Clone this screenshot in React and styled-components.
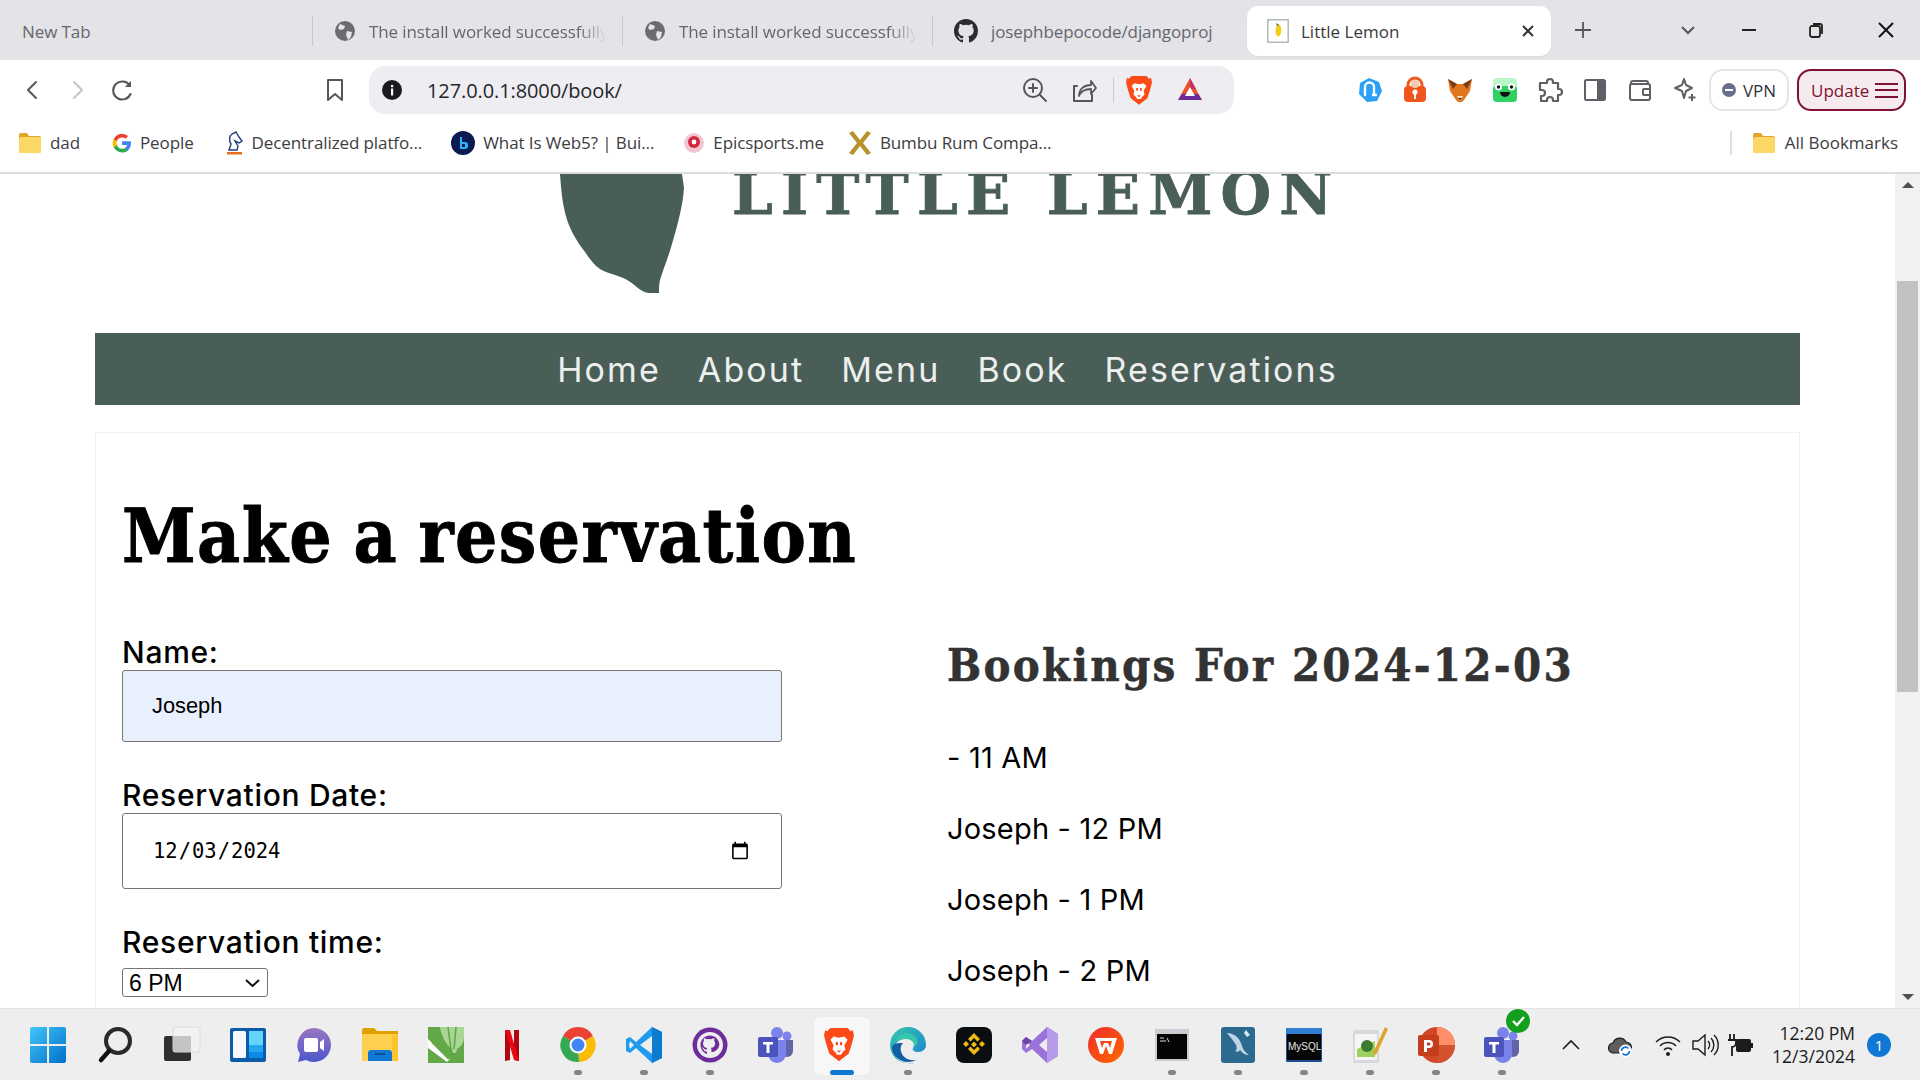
import React from "react";
import styled, { createGlobalStyle } from "styled-components";

const GREEN = "#495e57";
const UI = '"Open Sans", "Noto Sans", "Liberation Sans", sans-serif';
const KARLA = 'Inter, "Noto Sans", sans-serif';

const Global = createGlobalStyle`
  html, body { margin: 0; padding: 0; background: #fff; overflow: hidden; }
  * { box-sizing: border-box; }
  svg { overflow: visible; flex: none; }
`;

const Screen = styled.div`
  width: 1920px; height: 1080px; display: flex; flex-direction: column; overflow: hidden;
  font-family: ${UI}; background: #fff;
`;

/* ---------- browser chrome ---------- */
const TabStrip = styled.div`
  height: 60px; flex: none; background: #e3e3e8; display: flex; align-items: center; position: relative;
`;
const Tab = styled.div`
  width: ${p => p.$w}px; height: 50px; margin-top: 2px; flex: none; display: flex; align-items: center;
  padding-left: ${p => p.$pad}px; gap: 13px; font-size: 17px; color: #66666c;
  border-right: 1px solid ${p => (p.$sep ? "#c8c8cd" : "transparent")};
  border-image: ${p => (p.$sep ? "linear-gradient(transparent 22%, #c8c8cd 22%, #c8c8cd 78%, transparent 78%) 1" : "none")};
`;
const TabTitle = styled.span`
  white-space: nowrap; overflow: hidden; width: ${p => p.$w}px; letter-spacing: -0.1px;
  ${p => p.$fade && "-webkit-mask-image: linear-gradient(90deg, #000 88%, transparent);"}
`;
const ActiveTab = styled.div`
  width: 304px; height: 50px; margin-left: 4px; margin-top: 2px; flex: none; display: flex; align-items: center;
  background: #fff; border-radius: 11px; padding: 0 16px 0 20px; color: #3a3a40; font-size: 17px; gap: 12px;
  box-shadow: 0 1px 2px rgba(0,0,0,.05);
`;
const Grow = styled.span`flex: 1;`;
const StripRight = styled.div`
  display: flex; align-items: center; flex: none; margin-left: 11px; height: 100%;
`;
const StripBtn = styled.div`
  width: ${p => p.$w}px; margin-left: ${p => p.$ml || 0}px; display: flex; justify-content: center; align-items: center;
`;

const Toolbar = styled.div`
  height: 58px; flex: none; display: flex; align-items: center; padding-left: 11px; padding-top: 2px; background: #fff;
`;
const NavBtn = styled.div`
  width: ${p => p.$w || 44}px; height: 44px; display: flex; align-items: center; justify-content: center; flex: none;
  margin-left: ${p => p.$ml || 0}px;
`;
const Address = styled.div`
  width: 865px; height: 48px; margin-left: 12px; background: #eeeef2; border-radius: 16px; flex: none;
  display: flex; align-items: center; padding: 0 15px 0 13px; color: #26262b; font-size: 20px;
`;
const Url = styled.span`margin-left: 25px; flex: 1; letter-spacing: -0.1px;`;
const Divider = styled.span`width: 1px; height: 26px; background: #c9c9ce; margin: 0 3px;`;
const ExtGroup = styled.div`
  display: flex; align-items: center; margin-left: 113px; flex: none;
`;
const Vpn = styled.div`
  width: 80px; height: 42px; border: 2px solid #e6e6ea; border-radius: 14px; margin-left: 2px; display: flex;
  align-items: center; justify-content: center; gap: 7px; font-size: 17px; color: #33333a;
`;
const VpnDot = styled.span`
  width: 14px; height: 14px; border-radius: 50%; background: #6a6f8f; display: flex; align-items: center; justify-content: center;
  &::after { content: ""; width: 8px; height: 2px; background: #fff; }
`;
const UpdateBtn = styled.div`
  width: 109px; height: 42px; margin-left: 8px; border: 2px solid #7e1230; border-radius: 14px; background: #f5ebee;
  display: flex; align-items: center; padding-left: 12px; gap: 6px; color: #7e1230; font-size: 17px;
`;
const Burger = styled.span`
  width: 23px; height: 15px; border-top: 2px solid #7e1230; border-bottom: 2px solid #7e1230; position: relative;
  &::after { content: ""; position: absolute; left: 0; right: 0; top: 4.5px; height: 2px; background: #7e1230; }
`;

const Bookmarks = styled.div`
  height: 56px; flex: none; display: flex; align-items: center; padding: 0 0 5px 18px; border-bottom: 2px solid #dcdcdc;
  background: #fff; font-size: 17px; color: #3c3c42;
`;
const Mark = styled.div`
  display: flex; align-items: center; gap: 8px; margin-right: ${p => p.$mr}px; white-space: nowrap; letter-spacing: -0.1px;
`;
const MarkEnd = styled.div`
  margin-left: auto; display: flex; align-items: center; gap: 9px; padding-right: 22px;
`;
const MarkSep = styled.span`width: 2px; height: 24px; background: #dedee2; margin-right: 11px;`;

/* ---------- page ---------- */
const Viewport = styled.div`flex: 1; min-height: 0; display: flex; overflow: hidden; background: #fff;`;
const Page = styled.div`flex: 1; min-width: 0; padding-left: 95px; overflow: hidden;`;
const Wrap = styled.div`width: 1705px;`;
const LogoRow = styled.header`
  height: 159px; display: flex; justify-content: center; align-items: flex-start; gap: 48px; overflow: hidden;
`;
const LogoText = styled.div`
  font-family: "DejaVu Serif", serif; font-weight: 700; font-size: 58px; line-height: 1; letter-spacing: 8.2px;
  color: ${GREEN}; margin-top: -9px; white-space: nowrap; width: 603px; -webkit-text-stroke: 0.8px ${GREEN};
`;
const NavBar = styled.nav`
  height: 72px; background: ${GREEN}; display: flex; justify-content: center; align-items: center; gap: 37px;
`;
const NavLink = styled.a`
  font-family: ${KARLA}; font-size: 34px; color: #edefee; letter-spacing: 2.1px; font-weight: 400;
`;
const Card = styled.main`
  margin-top: 27px; border: 1px solid #f1f1f1; border-bottom: none; padding: 0 26px; height: 700px;
`;
const H1 = styled.h1`
  margin: 60px 0 0; font-family: "DejaVu Serif Condensed", "DejaVu Serif", serif; font-weight: 700; font-size: 74px;
  line-height: 86px; color: #000; letter-spacing: 1.4px; word-spacing: -4px; font-stretch: condensed; -webkit-text-stroke: 0.9px #000;
`;
const Cols = styled.div`
  display: grid; grid-template-columns: 660px 1fr; column-gap: 165px; margin-top: 61px;
`;
const Form = styled.form`display: flex; flex-direction: column;`;
const Label = styled.label`
  display: block; height: 30px; margin-top: ${p => p.$mt || 0}px; font-family: ${KARLA}; font-size: 30px; font-weight: 500;
  line-height: 25px; color: #000; letter-spacing: 0.7px;
`;
const TextInput = styled.input`
  display: block; width: 660px; height: 72px; border: 1px solid #767676; border-radius: 3px; background: #e8f0fe;
  padding: 0 29px; font-family: "Liberation Sans", sans-serif; font-size: 21.8px; color: #000; outline: none;
`;
const DateInput = styled.input`
  display: block; width: 660px; height: 76px; border: 1px solid #767676; border-radius: 3px; background: #fff;
  padding: 0 29px; font-family: "DejaVu Sans Mono", "Liberation Mono", monospace; font-size: 20.5px; color: #000; outline: none;
`;
const chevron = `url("data:image/svg+xml,%3Csvg xmlns='http://www.w3.org/2000/svg' viewBox='0 0 15 8'%3E%3Cpath d='M1 1l6.500 6L14 1' fill='none' stroke='%23111' stroke-width='2'/%3E%3C/svg%3E")`;
const TimeSelect = styled.select`
  display: block; width: 146px; height: 29px; margin-top: 8px; border: 1px solid #767676; border-radius: 3px;
  appearance: none; background: #fff ${chevron} no-repeat 122px center / 15px 8px;
  font-family: "Liberation Sans", sans-serif; font-size: 23px; color: #000; padding: 0 6px;
`;
const Bookings = styled.section`display: flex; flex-direction: column; margin-top: -4px;`;
const H2 = styled.h2`
  margin: 0; font-family: "DejaVu Serif Condensed", "DejaVu Serif", serif; font-weight: 700; font-size: 45px;
  line-height: 60px; color: #333; letter-spacing: 2.3px; font-stretch: condensed; -webkit-text-stroke: 0.5px #333;
`;
const Booking = styled.p`
  margin: ${p => p.$first ? 26 : 0}px 0 0; height: 71px; line-height: 71px; font-family: ${KARLA}; font-size: 29px; color: #000;
  letter-spacing: 0.2px; font-weight: 400;
`;
const Scrollbar = styled.aside`
  width: 25px; flex: none; background: #f1f1f1; display: flex; flex-direction: column; align-items: center;
`;
const ArrowUp = styled.span`
  margin-top: 8px; width: 0; height: 0; border-left: 6px solid transparent; border-right: 6px solid transparent;
  border-bottom: 6px solid #505050;
`;
const Thumb = styled.span`width: 21px; height: 411px; margin-top: 93px; background: #c1c1c1;`;
const ArrowDown = styled.span`
  margin-top: auto; margin-bottom: 8px; width: 0; height: 0; border-left: 6px solid transparent; border-right: 6px solid transparent;
  border-top: 6px solid #505050;
`;

/* ---------- taskbar ---------- */
const Taskbar = styled.footer`
  height: 72px; flex: none; background: #eeeeee; border-top: 1px solid #e4e4e4; display: flex; align-items: flex-start; padding-left: 17px;
`;
const Slot = styled.div`
  width: 66px; height: 71px; flex: none; display: flex; justify-content: center; position: relative; padding-top: 18px;
`;
const ActiveBg = styled.span`
  position: absolute; left: 5px; right: 5px; top: 8px; bottom: 5px; background: #f7f7f7; border-radius: 5px;
  box-shadow: 0 0 1px rgba(0,0,0,.15);
`;
const Dot = styled.span`
  position: absolute; bottom: 5px; left: 50%; transform: translateX(-50%); height: 5px; border-radius: 3px;
  width: ${p => (p.$active ? 24 : 8)}px; background: ${p => (p.$active ? "#0f78d4" : "#858585")};
`;
const IconBox = styled.span`position: relative; display: block; width: 36px; height: 36px;`;
const Tray = styled.div`
  margin-left: auto; display: flex; align-items: center; height: 71px; padding-right: 29px;
`;
const TrayIcon = styled.span`
  display: flex; justify-content: center; align-items: center; width: ${p => p.$w}px; color: #1c1c1c;
`;
const Clock = styled.div`
  margin-left: 18px; text-align: right; font-size: 17.5px; line-height: 23px; color: #1c1c1c; letter-spacing: 0;
`;
const Badge = styled.span`
  width: 24px; height: 24px; margin-left: 12px; border-radius: 50%; background: #0f78d4; color: #fff; font-size: 15px;
  display: flex; align-items: center; justify-content: center;
`;

/* ---------- icons ---------- */
const Ico = ({ s = 24, w, h, vb, children }) => (
  <svg width={w || s} height={h || s} viewBox={vb || `0 0 ${s} ${s}`} fill="none">{children}</svg>
);
const stroke = { stroke: "#55555c", strokeWidth: 2, strokeLinecap: "round", strokeLinejoin: "round" };

const Globe = () => (
  <Ico s={22}><circle cx="11" cy="11" r="10" fill="#6b6b72" />
    <path d="M6 4l5 2-1 3-4 1-2-2zM13 11l5 1-1 5-3 3-2-5z" fill="#e3e3e8" /></Ico>
);
const GitHubMark = ({ size = 24, color = "#2b2b30" }) => (
  <svg width={size} height={size} viewBox="0 0 16 16" fill={color}>
    <path d="M8 0C3.58 0 0 3.58 0 8c0 3.54 2.29 6.53 5.47 7.59.4.07.55-.17.55-.38 0-.19-.01-.82-.01-1.49-2.01.37-2.53-.49-2.69-.94-.09-.23-.48-.94-.82-1.13-.28-.15-.68-.52-.01-.53.63-.01 1.08.58 1.23.82.72 1.21 1.87.87 2.33.66.07-.52.28-.87.51-1.07-1.78-.2-3.64-.89-3.64-3.95 0-.87.31-1.59.82-2.15-.08-.2-.36-1.02.08-2.12 0 0 .67-.21 2.2.82a7.6 7.6 0 014 0c1.53-1.04 2.2-.82 2.2-.82.44 1.1.16 1.92.08 2.12.51.56.82 1.27.82 2.15 0 3.07-1.87 3.75-3.65 3.95.29.25.54.73.54 1.48 0 1.07-.01 1.93-.01 2.2 0 .21.15.46.55.38A8 8 0 0016 8c0-4.42-3.58-8-8-8z" />
  </svg>
);
const Favicon = () => (
  <Ico w={22} h={24} vb="0 0 22 24">
    <rect x=".8" y=".8" width="20.4" height="22.4" fill="#fff" stroke="#a9b5b0" strokeWidth="1.4" />
    <path d="M11 5c3 1 4 5 3 9-1 3-3 4-4 3-2-2-2-8 1-12z" fill="#f4ce14" /><path d="M9 4l3 2-2 1z" fill="#495e57" />
  </Ico>
);
const Folder = () => (
  <Ico w={24} h={22} vb="0 0 24 22">
    <path d="M1 3a2 2 0 012-2h6l2 3h10a2 2 0 012 2v13a2 2 0 01-2 2H3a2 2 0 01-2-2z" fill="#e0a526" />
    <rect x="1" y="5" width="22" height="16" rx="2" fill="#fbd866" />
  </Ico>
);
const BraveLion = ({ size = 28 }) => (
  <svg width={size} height={size * 1.14} viewBox="0 0 28 32">
    <path d="M6 1h16l3 3 2-1 1 5-2 8-3 9-9 7-9-7-3-9-2-8 1-5 2 1z" fill="#fb4a17" />
    <path d="M9 9l5 1 5-1 3 3-3 5 1 4-3 3-1 2h-4l-1-2-3-3 1-4-3-5z" fill="#fff" />
    <path d="M11 14h2v3h-2zM15 14h2v3h-2zM12 22h4l-2 2z" fill="#fb4a17" />
  </svg>
);
const Bat = () => (
  <Ico s={28}>
    <path d="M14 2l12 22H2z" fill="#e8532c" /><path d="M14 2l6 11-6 0z" fill="#c62f68" />
    <path d="M2 24h24l-4-6H6z" fill="#6a2a9a" /><path d="M14 11l5 9H9z" fill="#fff" />
  </Ico>
);

const Ext = {
  proton: () => (
    <Ico s={26}><path d="M12 1l10 4 3 9-5 10-10 1-8-8L3 6z" fill="#2aa1f5" />
      <path d="M8 18V10a4.5 4.5 0 019 0v8M16 18h3" stroke="#fff" strokeWidth="2.4" strokeLinecap="round" /></Ico>
  ),
  lock: () => (
    <Ico s={26}><path d="M6 11V8a7 7 0 0114 0v3" stroke="#f05a22" strokeWidth="3" /><rect x="2" y="9" width="22" height="16" rx="4" fill="#f0551e" />
      <circle cx="13" cy="7" r="4" fill="#f7c6ae" /><circle cx="13" cy="15" r="2.6" fill="#fff" /><rect x="12" y="15" width="2" height="7" fill="#fff" /></Ico>
  ),
  fox: () => (
    <Ico s={26}><path d="M1 2l9 5h6l9-5-2 12-6 9-2 2h-4l-2-2-6-9z" fill="#e2761b" /><path d="M1 2l9 5-4 5zM25 2l-9 5 4 5z" fill="#763d16" />
      <path d="M10 19h6l-2 4h-2z" fill="#f5d9c3" /><path d="M11 21h4l-2 2z" fill="#222" /></Ico>
  ),
  frog: () => (
    <Ico s={26}><rect x="1" y="1" width="24" height="24" rx="4" fill="#b7f7c8" /><rect x="1" y="9" width="24" height="16" rx="4" fill="#2fd163" />
      <circle cx="6.5" cy="10" r="3.5" fill="#fff" /><circle cx="19.5" cy="10" r="3.5" fill="#fff" /><circle cx="6.5" cy="10" r="1.7" fill="#111" /><circle cx="19.5" cy="10" r="1.7" fill="#111" />
      <path d="M8 15h10a5 5 0 01-10 0z" fill="#111" /></Ico>
  ),
  puzzle: () => (
    <Ico s={26}><path d="M10 6V5a3 3 0 016 0v1h5v6h1a3 3 0 010 6h-1v6h-5v-1a3 3 0 00-6 0v1H4v-5h1a3 3 0 000-6H3V6z" stroke="#5f6066" strokeWidth="2.2" strokeLinejoin="round" /></Ico>
  ),
  panel: () => (
    <Ico s={24}><rect x="2" y="2" width="20" height="20" rx="1.5" stroke="#5f6066" strokeWidth="2" /><rect x="14" y="2" width="8" height="20" fill="#5f6066" /></Ico>
  ),
  wallet: () => (
    <Ico s={24}><path d="M3 6V5a2 2 0 012-2h13a2 2 0 012 2v2" stroke="#5f6066" strokeWidth="2" /><rect x="2" y="6" width="20" height="16" rx="2" stroke="#5f6066" strokeWidth="2" />
      <rect x="15" y="11" width="7" height="6" rx="1" stroke="#5f6066" strokeWidth="2" /></Ico>
  ),
  spark: () => (
    <Ico s={26}><path d="M12 2l2 6 6 3-6 3-2 7-2-7-7-3 7-3z" stroke="#5f6066" strokeWidth="2" strokeLinejoin="round" /><path d="M20 17v7M16.5 20.5h7" stroke="#5f6066" strokeWidth="2" /></Ico>
  ),
};

const Task = {
  windows: () => (
    <Ico w={36} h={36} vb="2 0 36 36">
      <defs><linearGradient id="wg" x1="0" y1="0" x2="1" y2="1"><stop offset="0" stopColor="#43c6f7" /><stop offset="1" stopColor="#0070cc" /></linearGradient></defs>
      <path d="M0 2a2 2 0 012-2h15v17H0zM19 0h15a2 2 0 012 2v15H19zM0 19h17v17H2a2 2 0 01-2-2zM19 19h17v15a2 2 0 01-2 2H19z" fill="url(#wg)" />
    </Ico>
  ),
  search: () => (
    <Ico s={36}><circle cx="20" cy="14" r="12" stroke="#2a2a2a" strokeWidth="4" /><path d="M11 24l-8 9" stroke="#111" strokeWidth="4.5" strokeLinecap="round" /></Ico>
  ),
  taskview: () => (
    <Ico s={36}><rect x="0" y="9" width="27" height="25" rx="2" fill="#2f2f2f" /><rect x="9" y="0" width="27" height="25" rx="2" fill="#f3f3f3" fillOpacity=".75" stroke="#dcdcdc" /><rect x="9" y="9" width="18" height="16" fill="#c4c4c4" /></Ico>
  ),
  widgets: () => (
    <Ico s={36}><rect width="36" height="34" y="1" rx="2" fill="#0c5ba8" /><rect x="3" y="4" width="13" height="27" rx="1.5" fill="#f6f8fb" /><rect x="19" y="4" width="14" height="14" fill="#63d5ff" /><rect x="19" y="18" width="14" height="7" fill="#22a7f0" /><rect x="19" y="25" width="14" height="6" fill="#0d8ae6" /></Ico>
  ),
  meet: () => (
    <Ico s={36}>
      <defs><linearGradient id="mg" x1="0" y1="0" x2="0" y2="1"><stop offset="0" stopColor="#9a75c4" /><stop offset="1" stopColor="#4d57ca" /></linearGradient></defs>
      <path d="M18 1a17 17 0 11-8 32l-8 2 2-8A17 17 0 0118 1z" fill="url(#mg)" /><rect x="8" y="11" width="14" height="14" rx="2" fill="#fff" /><path d="M24 15l4-3v12l-4-3z" fill="#fff" />
    </Ico>
  ),
  files: () => (
    <Ico s={36}><path d="M0 3a2 2 0 012-2h10l3 3h21v30H0z" fill="#e0a100" /><rect y="7" width="36" height="27" rx="1" fill="#ffd04f" /><path d="M6 34V26a3 3 0 013-3h18a3 3 0 013 3v8z" fill="#0f78d4" /><rect x="13" y="26" width="10" height="2" fill="#0a4f91" /><path d="M30 8h6v26h-6z" fill="#fbb80d" opacity=".5" /></Ico>
  ),
  corel: () => (
    <Ico s={36}><rect width="36" height="36" fill="#62a846" /><path d="M12 0h24v10a14 14 0 01-7 12l-1 4h-3l-1-4C18 18 13 8 12 0z" fill="#a9d596" /><path d="M0 12l22 20-3 3L0 21z" fill="#fff" /><path d="M4 15l17 17" stroke="#62a846" strokeWidth="2" /><path d="M20 0l3 22M28 0l-2 22" stroke="#62a846" strokeWidth="1.6" /></Ico>
  ),
  netflix: () => (
    <Ico s={36}><path d="M11 3h5v30l-5 1z" fill="#b1060f" /><path d="M20 3h5v31l-5-1z" fill="#b1060f" /><path d="M11 3h5l9 31-5-1z" fill="#e50914" /></Ico>
  ),
  chrome: () => (
    <Ico s={36}><path d="M18 18L3 9a17 17 0 0130 0z" fill="#ea4335" /><path d="M18 18l15-9a17 17 0 01-14 26z" fill="#fbbc04" /><path d="M18 18L19 35A17 17 0 013 9z" fill="#34a853" /><circle cx="18" cy="18" r="8.5" fill="#fff" /><circle cx="18" cy="18" r="6.5" fill="#4285f4" /></Ico>
  ),
  vscode: () => (
    <Ico s={36}><path d="M26 0l10 5v26l-10 5L10 21l-6 5-4-2v-12l4-2 6 5z" fill="#1f9cf0" /><path d="M26 9L14 18l12 9z" fill="#eeeeee" /><path d="M26 0l10 5v26l-10 5z" fill="#0d7ccf" /><path d="M4 14l-1 4 1 4 4-4z" fill="#eeeeee" /></Ico>
  ),
  github: () => (
    <Ico s={36}><circle cx="18" cy="18" r="17.5" fill="#6e2d9b" /><circle cx="18" cy="18" r="13" fill="#eeeeee" /><g transform="translate(8.5 8.5) scale(1.18)"><path fill="#6e2d9b" d="M8 0C3.58 0 0 3.58 0 8c0 3.54 2.29 6.53 5.47 7.59V13.5c-1.5.3-2.5-.5-3-1.7-.2-.5-.6-.9-.8-1.1-.3-.2-.6-.5 0-.5.6 0 1 .6 1.2.8.7 1.2 1.9.9 2.4.7.1-.5.3-.9.5-1.1-1.8-.2-3.6-.9-3.6-4 0-.9.3-1.6.8-2.1-.1-.2-.4-1 .1-2.1 0 0 .7-.2 2.2.8a7.6 7.6 0 014 0c1.5-1 2.2-.8 2.2-.8.4 1.1.2 1.9.1 2.1.5.6.8 1.3.8 2.1 0 3.1-1.9 3.8-3.6 4 .3.3.5.7.5 1.5v2.1A8 8 0 0016 8c0-4.42-3.58-8-8-8z" /></g></Ico>
  ),
  teams: () => (
    <Ico s={36}><circle cx="29" cy="9" r="4.5" fill="#7b83eb" /><circle cx="19" cy="6" r="6" fill="#7b83eb" /><path d="M23 13h12v11a6 6 0 01-12 0z" fill="#6264a7" /><path d="M10 13h18v14a9 9 0 01-18 0z" fill="#7b83eb" /><rect x="0" y="10" width="20" height="20" rx="2" fill="#4b53bc" /><path d="M5 15h10v2.5h-3.500V26h-3v-8.500H5z" fill="#fff" /></Ico>
  ),
  brave: () => <BraveLion size={30} />,
  edge: () => (
    <Ico s={36}>
      <defs><linearGradient id="eg" x1="0" y1="0" x2="1" y2="1"><stop offset="0" stopColor="#37c8ab" /><stop offset="1" stopColor="#1a7fd6" /></linearGradient></defs>
      <path d="M18 0a18 18 0 0118 18c0 4-3 7-8 7-4 0-6-2-5-4 2-3 1-8-5-9-8-1-14 4-14 12 0 6 6 12 14 12 3 0 5 0 6 0a18 18 0 01-7 0C8 36 0 28 0 18A18 18 0 0118 0z" fill="url(#eg)" /><path d="M6 14C10 4 22 4 27 12c1 3 0 6-3 8 1-4-2-8-8-8-4 0-8 1-10 2z" fill="#37c8ab" /><path d="M2 20c0 8 7 15 16 15 3 0 6-1 8-2-8 1-14-3-15-9-1-3 0-6 2-8-5 0-10 0-11 4z" fill="#115ea3" />
    </Ico>
  ),
  binance: () => (
    <Ico s={36}><rect width="36" height="36" rx="8" fill="#0b0e11" /><path d="M18 6l6 6-2.500 2.500L18 11l-3.500 3.500L12 12zM7 17l3-3 3 3-3 3zM23 17l3-3 3 3-3 3zM18 14.500l3 3-3 3-3-3zM12 22l2.500-2.500L18 23l3.500-3.500L24 22l-6 6z" fill="#f0b90b" /></Ico>
  ),
  vs: () => (
    <Ico s={36}><path d="M25 0l11 7v22l-11 7L10 22l-6 4-4-4V14l4-4 6 4z" fill="#9b72d9" /><path d="M25 11l-8 7 8 7z" fill="#eeeeee" /><path d="M4 14l4 4-4 4z" fill="#eeeeee" /><path d="M25 0l11 7v22l-11 7z" fill="#b79be8" /><path d="M0 14l4-4 6 4-6 4z" fill="#6f42a6" /></Ico>
  ),
  wps: () => (
    <Ico s={36}>
      <defs><linearGradient id="wp" x1="0" y1="0" x2="1" y2="1"><stop offset="0" stopColor="#ee2c2c" /><stop offset="1" stopColor="#ff6a00" /></linearGradient></defs>
      <circle cx="18" cy="18" r="18" fill="url(#wp)" /><path d="M7 11h22l-5 16h-3l-3-8-3 8h-3zM12 14l2 7 2-5h4l2 5 2-7z" fill="#fff" fillRule="evenodd" />
    </Ico>
  ),
  cmd: () => (
    <Ico s={36}><rect x="1" y="2" width="34" height="32" fill="#c9cdd1" /><rect x="3" y="7" width="30" height="25" fill="#050505" /><path d="M6 11h4M6 14h6M13 11l2 4" stroke="#ddd" strokeWidth="1" /></Ico>
  ),
  mysql: () => (
    <Ico s={36}><rect x="1" width="34" height="36" rx="3" fill="#2d6a8f" /><path d="M7 6c7 0 13 5 15 13 1 4 4 7 7 9-4 0-7-2-9-5-1 2-3 2-5 1 2-1 2-3 1-6-2-4-5-7-9-12z" fill="#bcd6e5" /><path d="M26 3l4 5-3 2-3-4z" fill="#d8e6ee" /></Ico>
  ),
  shell: () => (
    <Ico s={36}><rect y="1" width="36" height="34" rx="1" fill="#1e4f94" /><rect y="1" width="36" height="6" fill="#2f7ed1" /><rect x="1" y="7" width="34" height="26" fill="#070707" /><text x="2" y="23" fontFamily="Liberation Sans, sans-serif" fontSize="10" fill="#e6e6e6">MySQL</text></Ico>
  ),
  notepad: () => (
    <Ico s={36}><path d="M1 3h26v33H1z" fill="#d7dadb" /><path d="M3 7h22v26H3z" fill="#f5f5f5" /><path d="M5 22l18-8v16H5z" fill="#9fcf5f" /><circle cx="15" cy="19" r="6" fill="#3c7a2f" /><path d="M33 0l-12 26 3 2L36 2z" fill="#e0a32c" /></Ico>
  ),
  ppt: () => (
    <Ico s={36}><circle cx="19" cy="18" r="18" fill="#d24726" /><path d="M19 0a18 18 0 0118 18H19z" fill="#ff8f6b" /><path d="M19 18h18a18 18 0 01-18 18z" fill="#d35230" /><rect x="0" y="8" width="21" height="21" rx="2" fill="#c43e1c" /><path d="M6 13h5a4 4 0 010 8H9v4H6zM9 15.500v3h2a1.500 1.500 0 000-3z" fill="#fff" fillRule="evenodd" /></Ico>
  ),
};

const Check = styled.span`
  position: absolute; right: -10px; top: -18px; width: 24px; height: 24px; border-radius: 50%; background: #12a01e; display: flex;
  align-items: center; justify-content: center;
`;

const tasks = [
  ["windows"], ["search"], ["taskview"], ["widgets"], ["meet"], ["files"], ["corel"], ["netflix"],
  ["chrome", 1], ["vscode", 1], ["github", 1], ["teams"], ["brave", 2], ["edge", 1], ["binance"], ["vs"], ["wps"],
  ["cmd", 1], ["mysql", 1], ["shell", 1], ["notepad", 1], ["ppt", 1], ["teams", 1, true],
];

const bookmarks = [
  ["dad", <Folder key="f" />, 32],
  ["People", <Ico key="g" s={20}><path d="M19 10.200c0-.7-.1-1.300-.2-1.900H10v3.700h5c-.2 1.200-.9 2.200-1.900 2.900v2.300h3c1.800-1.600 2.900-4 2.900-7z" fill="#4285f4" /><path d="M10 19.500c2.500 0 4.700-.8 6.200-2.300l-3-2.300c-.8.600-1.900.9-3.200.9-2.400 0-4.500-1.600-5.200-3.900H1.700v2.400A9.500 9.500 0 0010 19.500z" fill="#34a853" /><path d="M4.800 12a5.600 5.600 0 010-3.700V5.900H1.700a9.500 9.500 0 000 8.500z" fill="#fbbc04" /><path d="M10 4.400c1.400 0 2.600.5 3.500 1.400l2.700-2.700A9.500 9.500 0 001.700 5.900l3.100 2.400C5.500 6 7.600 4.400 10 4.400z" fill="#ea4335" /></Ico>, 32],
  ["Decentralized platfo...", <Ico key="d" w={18} h={24} vb="0 0 18 24"><path d="M10 1l3 5 3 4-3 2-4-2 3 5-1 4H3l2-6c-2-3-2-8 1-10z" stroke="#1f3f7a" strokeWidth="1.4" /><rect x="1" y="21" width="15" height="2.500" fill="#e8701a" /></Ico>, 29],
  ["What Is Web5? | Bui...", <Ico key="b" s={24}><circle cx="12" cy="12" r="12" fill="#0b1a52" /><path d="M9 6h2v5h3a3 3 0 013 3v1a3 3 0 01-3 3H9zm2 7v3h3v-3z" fill="#29b6f6" fillRule="evenodd" /></Ico>, 29],
  ["Epicsports.me", <Ico key="e" s={22}><circle cx="11" cy="11" r="10" fill="#f3c6d2" /><circle cx="11" cy="10" r="6" fill="#d5263f" /><circle cx="11" cy="10" r="2.400" fill="#fff" /></Ico>, 24],
  ["Bumbu Rum Compa...", <Ico key="r" s={24}><path d="M1 2l4-2 7 9 7-9 4 2-8 10 8 10-4 2-7-9-7 9-4-2 8-10z" fill="#b8922c" /></Ico>, 0],
];

export default function App() {
  return (
    <Screen>
      <Global />
      <TabStrip>
        <Tab $w={313} $pad={22} $sep><TabTitle $w={100}>New Tab</TabTitle></Tab>
        <Tab $w={310} $pad={21} $sep><Globe /><TabTitle $w={238} $fade>The install worked successfully! Congratulations!</TabTitle></Tab>
        <Tab $w={310} $pad={21} $sep><Globe /><TabTitle $w={238} $fade>The install worked successfully! Congratulations!</TabTitle></Tab>
        <Tab $w={310} $pad={21}><GitHubMark /><TabTitle $w={240}>josephbepocode/djangoproj</TabTitle></Tab>
        <ActiveTab>
          <Favicon /><span>Little Lemon</span><Grow />
          <Ico s={14}><path d="M2 2l10 10M12 2L2 12" stroke="#333" strokeWidth="2" /></Ico>
        </ActiveTab>
        <StripRight>
          <StripBtn $w={42}><Ico s={20}><path d="M10 2v16M2 10h16" stroke="#555" strokeWidth="1.8" /></Ico></StripBtn>
          <StripBtn $w={22} $ml={73}><Ico s={16}><path d="M2 5l6 6 6-6" stroke="#55555c" strokeWidth="2" /></Ico></StripBtn>
          <StripBtn $w={20} $ml={40}><Ico s={16}><path d="M1 8h14" stroke="#222" strokeWidth="2" /></Ico></StripBtn>
          <StripBtn $w={20} $ml={47}><Ico s={16}><rect x="2" y="4" width="10" height="11" rx="2" stroke="#222" strokeWidth="1.8" /><path d="M5 2h7a2 2 0 012 2v8" stroke="#222" strokeWidth="1.8" /></Ico></StripBtn>
          <StripBtn $w={20} $ml={50}><Ico s={18}><path d="M2 2l14 14M16 2L2 16" stroke="#111" strokeWidth="2" /></Ico></StripBtn>
        </StripRight>
      </TabStrip>

      <Toolbar>
        <NavBtn><Ico s={24}><path d="M15 4l-8 8 8 8" {...stroke} /></Ico></NavBtn>
        <NavBtn><Ico s={24}><path d="M9 4l8 8-8 8" {...stroke} stroke="#c4c4c8" /></Ico></NavBtn>
        <NavBtn $w={46}><Ico s={24}><path d="M20 8a9 9 0 10.500 8" {...stroke} /><path d="M21 3v6h-6" fill="#55555c" /></Ico></NavBtn>
        <NavBtn $ml={168}><Ico s={24}><path d="M5 2h14v20l-7-6-7 6z" {...stroke} /></Ico></NavBtn>
        <Address>
          <Ico s={20}><circle cx="10" cy="10" r="10" fill="#1a1a1e" /><rect x="9" y="8.500" width="2.200" height="7" fill="#fff" /><rect x="9" y="5" width="2.200" height="2.200" fill="#fff" /></Ico>
          <Url>127.0.0.1:8000/book/</Url>
          <Ico s={26}><circle cx="11" cy="11" r="9" {...stroke} /><path d="M11 7v8M7 11h8M18 18l6 6" {...stroke} /></Ico>
          <NavBtn $w={52} $ml={10}><Ico s={26}><path d="M6 9H3v15h18v-6" {...stroke} /><path d="M8 19c0-7 5-11 12-11V4l5 7-5 6v-5c-6 0-10 2-12 7z" {...stroke} strokeWidth="1.800" /></Ico></NavBtn>
          <Divider />
          <NavBtn $w={44}><BraveLion size={26} /></NavBtn>
          <NavBtn $w={58}><Bat /></NavBtn>
        </Address>
        <ExtGroup>
          {Object.values(Ext).map((I, i) => <NavBtn key={i} $w={45}><I /></NavBtn>)}
          <Vpn><VpnDot />VPN</Vpn>
          <UpdateBtn>Update<Burger /></UpdateBtn>
        </ExtGroup>
      </Toolbar>

      <Bookmarks>
        {bookmarks.map(([t, icon, mr]) => <Mark key={t} $mr={mr}>{icon}{t}</Mark>)}
        <MarkEnd><MarkSep /><Folder />All Bookmarks</MarkEnd>
      </Bookmarks>

      <Viewport>
        <Page>
          <Wrap>
            <LogoRow>
              <svg width="124" height="119" viewBox="0 0 124 119">
                <path d="M0 0C1 14 2 24 4 34C8 54 16 66 25 78C33 90 38 95 46 98C58 102 66 104 73 110C80 116 85 119 89 119L99 119C99 114 99 110 100 106C103 96 108 84 112 70C118 50 123 30 124 14L122 0Z" fill={GREEN} />
              </svg>
              <LogoText>LITTLE LEMON</LogoText>
            </LogoRow>
            <NavBar>
              {["Home", "About", "Menu", "Book", "Reservations"].map(n => <NavLink key={n}>{n}</NavLink>)}
            </NavBar>
            <Card>
              <H1>Make a reservation</H1>
              <Cols>
                <Form>
                  <Label htmlFor="name">Name:</Label>
                  <TextInput id="name" defaultValue="Joseph" />
                  <Label $mt={41} htmlFor="date">Reservation Date:</Label>
                  <DateInput id="date" type="date" defaultValue="2024-12-03" />
                  <Label $mt={41} htmlFor="time">Reservation time:</Label>
                  <TimeSelect id="time" defaultValue="6 PM">
                    <option>6 PM</option>
                  </TimeSelect>
                </Form>
                <Bookings>
                  <H2>Bookings For 2024-12-03</H2>
                  <Booking $first>- 11 AM</Booking>
                  <Booking>Joseph - 12 PM</Booking>
                  <Booking>Joseph - 1 PM</Booking>
                  <Booking>Joseph - 2 PM</Booking>
                </Bookings>
              </Cols>
            </Card>
          </Wrap>
        </Page>
        <Scrollbar><ArrowUp /><Thumb /><ArrowDown /></Scrollbar>
      </Viewport>

      <Taskbar>
        {tasks.map(([n, state, check], i) => {
          const I = Task[n];
          return (
            <Slot key={i}>
              {state === 2 && <ActiveBg />}
              <IconBox>
                <I />
                {check && <Check><Ico s={14}><path d="M2 7l4 4 7-8" stroke="#fff" strokeWidth="2.400" /></Ico></Check>}
              </IconBox>
              {state ? <Dot $active={state === 2} /> : null}
            </Slot>
          );
        })}
        <Tray>
          <TrayIcon $w={30}><Ico s={20}><path d="M2 14l8-8 8 8" stroke="#1c1c1c" strokeWidth="1.600" /></Ico></TrayIcon>
          <TrayIcon $w={68}><Ico s={26}><path d="M7 21a5 5 0 01-1-10 7 7 0 0113-1 5 5 0 010 11z" fill="#5d5d5d" stroke="#1c1c1c" strokeWidth="1.200" /><circle cx="18.500" cy="19" r="6.500" fill="#fff" /><path d="M14.500 19a4 4 0 017-2.500M22.500 19a4 4 0 01-7 2.500" stroke="#0f78d4" strokeWidth="1.600" /></Ico></TrayIcon>
          <TrayIcon $w={28}><Ico s={26}><path d="M1 10a17 17 0 0124 0M5 14a11 11 0 0116 0M9 18a5 5 0 018 0" stroke="#1c1c1c" strokeWidth="1.500" /><circle cx="13" cy="22" r="2" fill="#1c1c1c" /></Ico></TrayIcon>
          <TrayIcon $w={44}><Ico s={26}><path d="M2 9h5l7-6v20l-7-6H2z" stroke="#1c1c1c" strokeWidth="1.400" /><path d="M17 9a6 6 0 010 8M20 6a10 10 0 010 14M23 3a14 14 0 010 20" stroke="#1c1c1c" strokeWidth="1.400" /></Ico></TrayIcon>
          <TrayIcon $w={28}><Ico s={26}><rect x="9" y="7" width="15" height="13" rx="2" fill="#1c1c1c" /><rect x="24" y="11" width="2" height="5" fill="#1c1c1c" /><path d="M3 2v6M7 2v6M1 8h8v3a4 4 0 01-4 4v9" stroke="#1c1c1c" strokeWidth="1.800" /></Ico></TrayIcon>
          <Clock>12:20 PM<br />12/3/2024</Clock>
          <Badge>1</Badge>
        </Tray>
      </Taskbar>
    </Screen>
  );
}
